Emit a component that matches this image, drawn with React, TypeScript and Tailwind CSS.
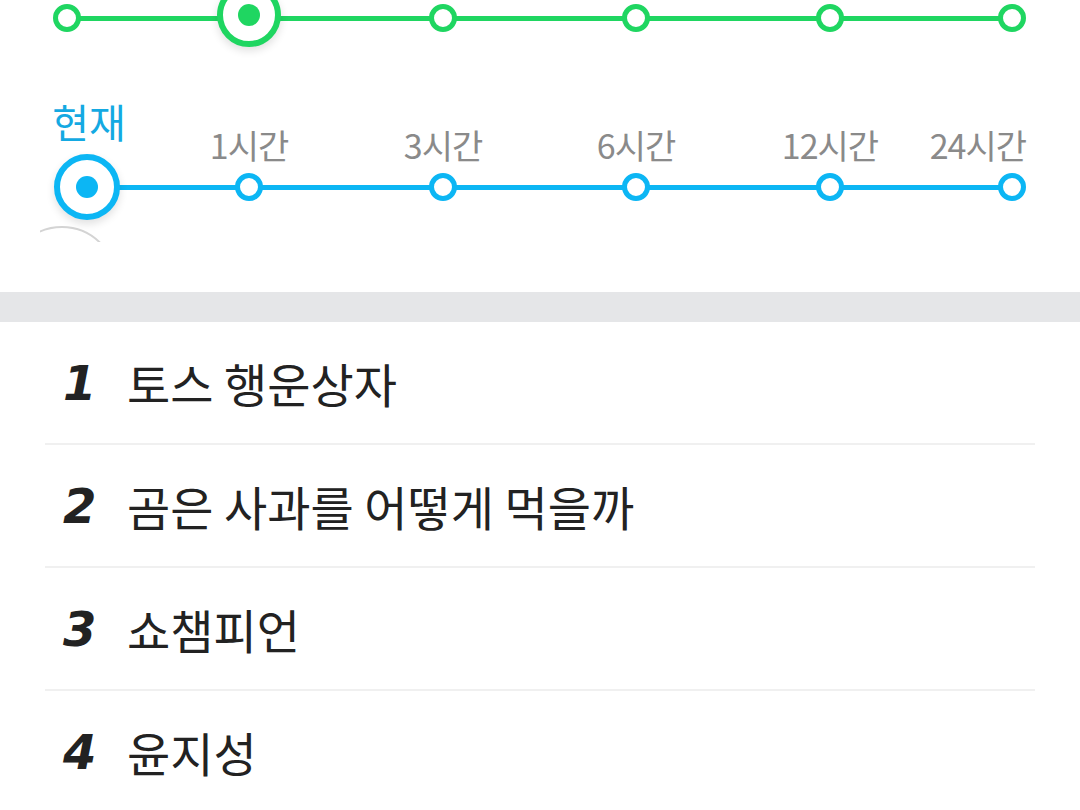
import React from 'react';

const GREEN = 'green';
const BLUE = 'blue';

const font = { fontFamily: '"Noto Sans CJK KR", "Noto Sans", sans-serif' };

function SmallNode({ color }: { color: string }) {
  return (
    <div className="relative z-10 flex w-0 items-center justify-center">
      <div
        className={
          color === GREEN
            ? 'h-[28px] w-[28px] shrink-0 rounded-full border-[5px] border-[#1fd661] bg-white'
            : 'h-[28px] w-[28px] shrink-0 rounded-full border-[5px] border-[#0cb6f4] bg-white'
        }
      />
    </div>
  );
}

function BigNode({ color }: { color: string }) {
  return (
    <div className="relative z-10 flex w-0 items-center justify-center">
      {color === GREEN ? (
        <div className="-mt-[6px] flex h-[64px] w-[64px] shrink-0 items-center justify-center rounded-full border-[6px] border-[#1fd661] bg-white shadow-[0_4px_8px_rgba(0,0,0,0.12)]">
          <div className="h-[22px] w-[22px] rounded-full bg-[#1fd661]" />
        </div>
      ) : (
        <div className="flex h-[66px] w-[66px] shrink-0 items-center justify-center rounded-full border-[6px] border-[#0cb6f4] bg-white shadow-[0_4px_8px_rgba(0,0,0,0.12)]">
          <div className="h-[22px] w-[22px] rounded-full bg-[#0cb6f4]" />
        </div>
      )}
    </div>
  );
}

function Seg({ color, w }: { color: string; w: string }) {
  return <div className={`${w} h-[5px] ${color === GREEN ? 'bg-[#1fd661]' : 'bg-[#0cb6f4]'}`} />;
}

function Label({ text }: { text: string }) {
  return (
    <div className="flex w-0 justify-center">
      <span className="whitespace-nowrap text-[34px] leading-none tracking-[-1px] text-[#8a8a8a]">{text}</span>
    </div>
  );
}

const ranks = ['토스 행운상자', '곰은 사과를 어떻게 먹을까', '쇼챔피언', '윤지성'];

export default function App() {
  return (
    <div className="h-[810px] w-[1080px] overflow-hidden bg-white" style={font}>
      {/* time sliders */}
      <div className="h-[292px]">
        {/* green slider */}
        <div className="flex h-[36px] items-center pl-[67px]">
          <SmallNode color={GREEN} />
          <Seg color={GREEN} w="w-[182px]" />
          <BigNode color={GREEN} />
          <Seg color={GREEN} w="w-[194px]" />
          <SmallNode color={GREEN} />
          <Seg color={GREEN} w="w-[193px]" />
          <SmallNode color={GREEN} />
          <Seg color={GREEN} w="w-[194px]" />
          <SmallNode color={GREEN} />
          <Seg color={GREEN} w="w-[182px]" />
          <SmallNode color={GREEN} />
        </div>

        {/* labels */}
        <div className="mt-[64px] flex h-[62px] items-end pl-[87px]">
          <div className="flex w-0 justify-center">
            <span className="mb-[21px] ml-[4px] whitespace-nowrap text-[40px] leading-none text-[#14a9e2]">현재</span>
          </div>
          <div className="w-[162px]" />
          <Label text="1시간" />
          <div className="w-[194px]" />
          <Label text="3시간" />
          <div className="w-[193px]" />
          <Label text="6시간" />
          <div className="w-[194px]" />
          <Label text="12시간" />
          <div className="w-[182px]" />
          <div className="flex w-0 justify-end">
            <span className="translate-x-[14px] whitespace-nowrap text-[34px] leading-none tracking-[-1px] text-[#8a8a8a]">
              24시간
            </span>
          </div>
        </div>

        {/* blue slider */}
        <div className="mt-[7px] flex h-[36px] items-center pl-[87px]">
          <BigNode color={BLUE} />
          <Seg color={BLUE} w="w-[162px]" />
          <SmallNode color={BLUE} />
          <Seg color={BLUE} w="w-[194px]" />
          <SmallNode color={BLUE} />
          <Seg color={BLUE} w="w-[193px]" />
          <SmallNode color={BLUE} />
          <Seg color={BLUE} w="w-[194px]" />
          <SmallNode color={BLUE} />
          <Seg color={BLUE} w="w-[182px]" />
          <SmallNode color={BLUE} />
        </div>

        {/* clipped ripple edge */}
        <div className="ml-[40px] mt-[21px] h-[16px] w-[62px] overflow-hidden">
          <div className="-ml-[33px] h-[110px] w-[110px] rounded-full border-2 border-[#d4d4d4]" />
        </div>
      </div>

      {/* divider band */}
      <div className="h-[30px] bg-[#e5e6e8]" />

      {/* ranking list */}
      <div>
        {ranks.map((r, i) => (
          <div key={r}>
            <div className="flex h-[121px] items-center pl-[63px]">
              <span
                className="w-[64px] text-[48px] font-bold italic leading-none text-[#222]"
                style={{ fontFamily: '"DejaVu Sans", sans-serif' }}
              >
                {i + 1}
              </span>
              <span className="text-[47px] leading-none text-[#222]">{r}</span>
            </div>
            {i < ranks.length - 1 && <div className="mx-[45px] h-[2px] bg-[#f0f0f0]" />}
          </div>
        ))}
      </div>
    </div>
  );
}
